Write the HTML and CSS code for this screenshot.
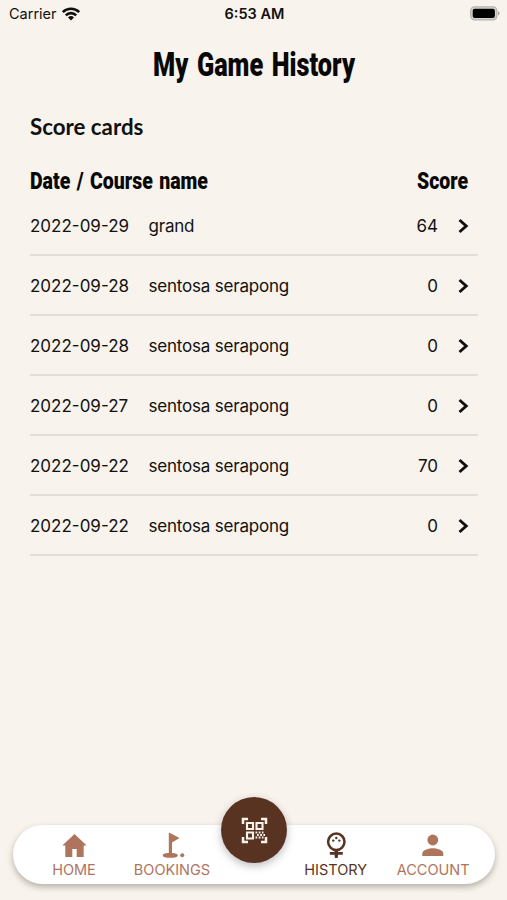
FILE: index.html
```html
<!DOCTYPE html>
<html lang="en">
<head>
<meta charset="utf-8">
<title>My Game History</title>
<link rel="stylesheet" href="styles.css">
</head>
<body>
<div class="screen">
  <header class="status">
    <div class="carrier"><span>Carrier</span>
      <svg width="18" height="14" viewBox="0 0 18 14"><g fill="none" stroke="#111" stroke-width="2.6"><path d="M.8 5.1a11.6 11.6 0 0 1 16.4 0"/><path d="M3.8 8.3a7.4 7.4 0 0 1 10.4 0"/></g><path d="M9 13.6l-3-3.1a4.3 4.3 0 0 1 6 0z" fill="#111"/></svg>
    </div>
    <div class="time">6:53 AM</div>
    <svg class="battery" width="30" height="15" viewBox="0 0 30 15"><rect x=".8" y=".8" width="26" height="13" rx="3.8" fill="#d8d5d0" stroke="#b5b2ad" stroke-width="1.3"/><rect x="2.7" y="2.7" width="22.2" height="9.2" rx="2" fill="#000"/><path d="M28 5.2q3.4 2.1 0 4.2z" fill="#a9a6a2"/></svg>
  </header>
  <h1 class="title"><svg width="202" height="48"><text x="0" y="34" textLength="202" lengthAdjust="spacingAndGlyphs">My Game History</text></svg></h1>
  <main>
    <h2 class="subtitle">Score cards</h2>
    <div class="columns">
      <svg width="178" height="36"><text x="0" y="25" textLength="178" lengthAdjust="spacingAndGlyphs">Date / Course name</text></svg>
      <svg width="51" height="36"><text x="0" y="25" textLength="51" lengthAdjust="spacingAndGlyphs">Score</text></svg>
    </div>
    <ul class="cards">
      <li><span class="date">2022-09-29</span><span class="course">grand</span><span class="score">64</span><svg class="chev" viewBox="0 0 10 14"><path d="M1.5 1L8.200 7l-6.700 6"/></svg></li>
      <li><span class="date">2022-09-28</span><span class="course">sentosa serapong</span><span class="score">0</span><svg class="chev" viewBox="0 0 10 14"><path d="M1.5 1L8.200 7l-6.700 6"/></svg></li>
      <li><span class="date">2022-09-28</span><span class="course">sentosa serapong</span><span class="score">0</span><svg class="chev" viewBox="0 0 10 14"><path d="M1.5 1L8.200 7l-6.700 6"/></svg></li>
      <li><span class="date">2022-09-27</span><span class="course">sentosa serapong</span><span class="score">0</span><svg class="chev" viewBox="0 0 10 14"><path d="M1.5 1L8.200 7l-6.700 6"/></svg></li>
      <li><span class="date">2022-09-22</span><span class="course">sentosa serapong</span><span class="score">70</span><svg class="chev" viewBox="0 0 10 14"><path d="M1.5 1L8.200 7l-6.700 6"/></svg></li>
      <li><span class="date">2022-09-22</span><span class="course">sentosa serapong</span><span class="score">0</span><svg class="chev" viewBox="0 0 10 14"><path d="M1.5 1L8.200 7l-6.700 6"/></svg></li>
    </ul>
  </main>
  <nav class="tabs">
    <a class="tab home"><svg viewBox="0 0 28 28"><path fill="currentColor" d="M14.500 3L2.300 14.500h3V26h7v-8h4.400v8h7V14.500h3z"/></svg><span>HOME</span></a>
    <a class="tab bookings"><svg viewBox="0 0 28 28"><path fill="currentColor" d="M10.800 1.800l1.700.4L21.500 7 14 11.500V22q5.800.2 5.800 2.400c0 1.500-3.300 2.300-7.500 2.300s-7.500-.8-7.500-2.300c0-1.700 2.800-2.400 6-2.400z"/><circle cx="24.200" cy="24.200" r="2" fill="currentColor"/></svg><span>BOOKINGS</span></a>
    <a class="scan"><svg width="27" height="27" viewBox="0 0 27 27" fill="none" stroke="#f8f3ec"><path stroke-width="2.500" d="M2 7V2h5M20 2h5v5M2 20v5h5M20 25h5v-5"/><path stroke-width="2.100" d="M6 6h6v6H6zM15.500 6h6v6h-6zM6 15.500h6v6H6z"/><path stroke-width="1.800" stroke-dasharray="1.800 1.400" d="M14.500 15.500h8M16 18h8M14.500 20.500h8"/></svg></a>
    <a class="tab history"><svg viewBox="0 0 28 28"><circle cx="14.300" cy="10.800" r="8.200" fill="none" stroke="currentColor" stroke-width="2.500"/><g fill="currentColor"><circle cx="14.300" cy="7" r="1.200"/><circle cx="11.300" cy="9.600" r="1.200"/><circle cx="17.300" cy="9.600" r="1.200"/><path d="M12.500 18.500h3.600v3h-3.600zM7.800 21h13v2.700h-4.700l-.4 3.300h-2.800l-.4-3.300H7.800z"/></g></svg><span>HISTORY</span></a>
    <a class="tab account"><svg viewBox="0 0 28 28"><g fill="currentColor"><circle cx="13.800" cy="9" r="5.400"/><path d="M3.300 25v-2.600c0-3.600 7-5.200 10.500-5.200s10.500 1.600 10.500 5.200v2.600z"/></g></svg><span>ACCOUNT</span></a>
  </nav>
</div>
</body>
</html>
```
FILE: styles.css
```css
* { box-sizing: border-box; }
body { margin: 0; background: #f8f3ec; color: #111; font-family: Inter, sans-serif; }
svg { display: block; flex: none; overflow: visible; }
.screen { height: 900px; display: flex; flex-direction: column; overflow: hidden; }
.status { height: 27px; padding: 0 7px 0 9px; display: grid; grid-template-columns: 1fr auto 1fr; align-items: center; font-size: 14.500px; }
.carrier { display: flex; align-items: center; gap: 5px; }
.time { font-weight: 600; font-size: 14.500px; }
.battery { justify-self: end; }
.title { margin: 15px 0 0; height: 44px; display: flex; justify-content: center; }
.title text, .columns text { font-family: Roboto, sans-serif; font-weight: 900; fill: #080808; }
.title text { font-size: 33.500px; word-spacing: 3px; }
main { flex: 1; padding: 0 29px 0 30px; }
.subtitle { margin: 27px 0 0; font: 700 22.300px/28px Lato, sans-serif; }
.columns { margin-top: 23px; padding-right: 10px; height: 32px; display: flex; justify-content: space-between; }
.columns text { font-size: 24.500px; word-spacing: 2px; }
.cards { list-style: none; margin: .4px 0 0; padding: 0; }
.cards li { height: 59.900px; padding-top: 2px; display: flex; align-items: center; border-bottom: 2px solid #e0dddb; font-size: 17px; }
.date { width: 118.500px; }
.course { flex: 1; letter-spacing: -.2px; }
.chev { width: 10px; height: 14px; margin: 0 10px 0 20px; fill: none; stroke: #111; stroke-width: 2.900; }
.tabs { height: 59px; margin: 0 12px 16px 13px; background: #fff; border-radius: 30px; display: flex; box-shadow: 0 3px 6px rgba(60, 50, 40, .35); }
.tab { width: 98px; padding-top: 6px; display: flex; flex-direction: column; align-items: center; color: #af755c; font-size: 14.500px; line-height: 18px; }
.tab svg { width: 28px; height: 28px; margin-bottom: 2px; }
.home { margin-left: 12px; }
.history { color: #593322; margin-left: -.3px; }
.account { margin-left: -.5px; }
.scan { width: 66px; height: 66px; margin: -28px 0 0; border-radius: 50%; background: #593322; display: grid; place-items: center; box-shadow: 0 3px 8px rgba(40, 40, 60, .3); }
```
